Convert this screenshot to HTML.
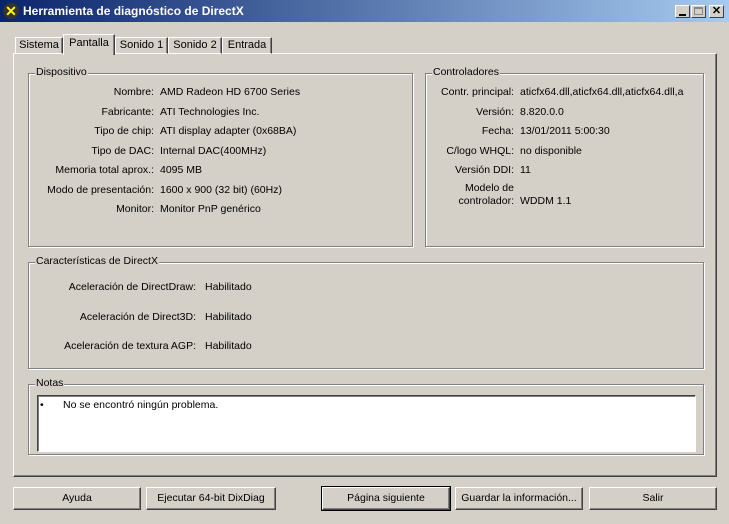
<!DOCTYPE html>
<html><head><meta charset="utf-8"><style>
*{box-sizing:border-box;margin:0;padding:0}
body{width:729px;height:524px;background:#d4d0c8;font:10.5px "Liberation Sans",sans-serif;color:#000;position:relative;overflow:hidden}
.a{position:absolute;white-space:nowrap}
.t{height:22px;left:0;top:0;width:729px;background:linear-gradient(90deg,#0a246a,#a6caf0);color:#fff;font-weight:bold;font-size:12px}
.grp{position:absolute;border:1px solid #808080;box-shadow:inset 1px 1px 0 #fff,1px 1px 0 #fff}
.leg{position:absolute;top:-8px;left:6px;background:#d4d0c8;padding:0 1px}
.btn{position:absolute;top:487px;height:23px;border:1px solid;border-color:#fff #404040 #404040 #fff;box-shadow:inset -1px -1px 0 #808080;text-align:center;line-height:21px}
.tab{position:absolute;top:37px;height:17px;border:1px solid;border-color:#fff #404040 transparent #fff;box-shadow:inset -1px 0 0 #808080;line-height:15px;text-align:center;white-space:nowrap;font-size:11px}
.r{text-align:right}
.wb{position:absolute;width:15px;height:13px;top:5px;background:#d4d0c8;border:1px solid;border-color:#fff #404040 #404040 #fff}
</style></head><body>
<div class="a t"><div class="a" style="left:3px;top:3px;width:16px;height:16px;border-radius:50%;background:#333;color:#ff0;font-size:14px;line-height:16px;text-align:center">✕</div><div class="a" style="left:23px;top:4px">Herramienta de diagnóstico de DirectX</div>
<div class="wb" style="left:675px"><div class="a" style="left:3px;top:8px;width:7px;height:2px;background:#000"></div></div>
<div class="wb" style="left:691px"><div class="a" style="left:2px;top:1px;width:9px;height:8px;border:1px solid #888;border-top-width:2px"></div></div>
<div class="wb" style="left:709px;font-weight:bold;color:#000;font-size:11px;text-align:center;line-height:11px">✕</div>
</div>
<div class="a" style="left:13px;top:53px;width:704px;height:424px;border:1px solid;border-color:#fff #404040 #404040 #fff;box-shadow:inset -1px -1px 0 #808080"></div>
<div class="tab" style="left:15px;width:48px">Sistema</div>
<div class="tab" style="left:115px;width:53px">Sonido 1</div>
<div class="tab" style="left:168px;width:54px">Sonido 2</div>
<div class="tab" style="left:222px;width:50px">Entrada</div>
<div class="tab" style="left:63px;width:52px;top:34px;height:21px;background:#d4d0c8;border-bottom:none;line-height:17px">Pantalla</div>

<div class="grp" style="left:28px;top:73px;width:385px;height:174px"><div class="leg">Dispositivo</div></div>
<div class="grp" style="left:425px;top:73px;width:279px;height:174px"><div class="leg">Controladores</div></div>
<div class="grp" style="left:28px;top:262px;width:676px;height:107px"><div class="leg">Características de DirectX</div></div>
<div class="grp" style="left:28px;top:384px;width:676px;height:71px"><div class="leg">Notas</div></div>
<div class="a" style="left:37px;top:395px;width:659px;height:57px;background:#fff;border:1px solid;border-color:#404040 #fff #fff #404040;box-shadow:inset 1px 1px 0 #808080"></div>
<div class="a" style="left:40px;top:399px">•</div>
<div class="a" style="left:63px;top:399px">No se encontró ningún problema.</div>

<div class="a r" style="right:575px;top:83px;line-height:19.5px">Nombre:<br>Fabricante:<br>Tipo de chip:<br>Tipo de DAC:<br>Memoria total aprox.:<br>Modo de presentación:<br>Monitor:</div>
<div class="a" style="left:160px;top:83px;line-height:19.5px">AMD Radeon HD 6700 Series<br>ATI Technologies Inc.<br>ATI display adapter (0x68BA)<br>Internal DAC(400MHz)<br>4095 MB<br>1600 x 900 (32 bit) (60Hz)<br>Monitor PnP genérico</div>

<div class="a r" style="right:215px;top:83px;line-height:19.5px">Contr. principal:<br>Versión:<br>Fecha:<br>C/logo WHQL:<br>Versión DDI:</div>
<div class="a" style="left:520px;top:83px;line-height:19.5px">aticfx64.dll,aticfx64.dll,aticfx64.dll,a<br>8.820.0.0<br>13/01/2011 5:00:30<br>no disponible<br>11</div>
<div class="a r" style="right:215px;top:182px;line-height:13px">Modelo de<br>controlador:</div>
<div class="a" style="left:520px;top:195px">WDDM 1.1</div>

<div class="a r" style="right:533px;top:273px;line-height:29.5px">Aceleración de DirectDraw:<br>Aceleración de Direct3D:<br>Aceleración de textura AGP:</div>
<div class="a" style="left:205px;top:273px;line-height:29.5px">Habilitado<br>Habilitado<br>Habilitado</div>

<div class="btn" style="left:13px;width:128px">Ayuda</div>
<div class="btn" style="left:146px;width:130px">Ejecutar 64-bit DixDiag</div>
<div class="btn" style="left:322px;width:128px;outline:1px solid #000">Página siguiente</div>
<div class="btn" style="left:455px;width:128px">Guardar la información...</div>
<div class="btn" style="left:589px;width:128px">Salir</div>
</body></html>
